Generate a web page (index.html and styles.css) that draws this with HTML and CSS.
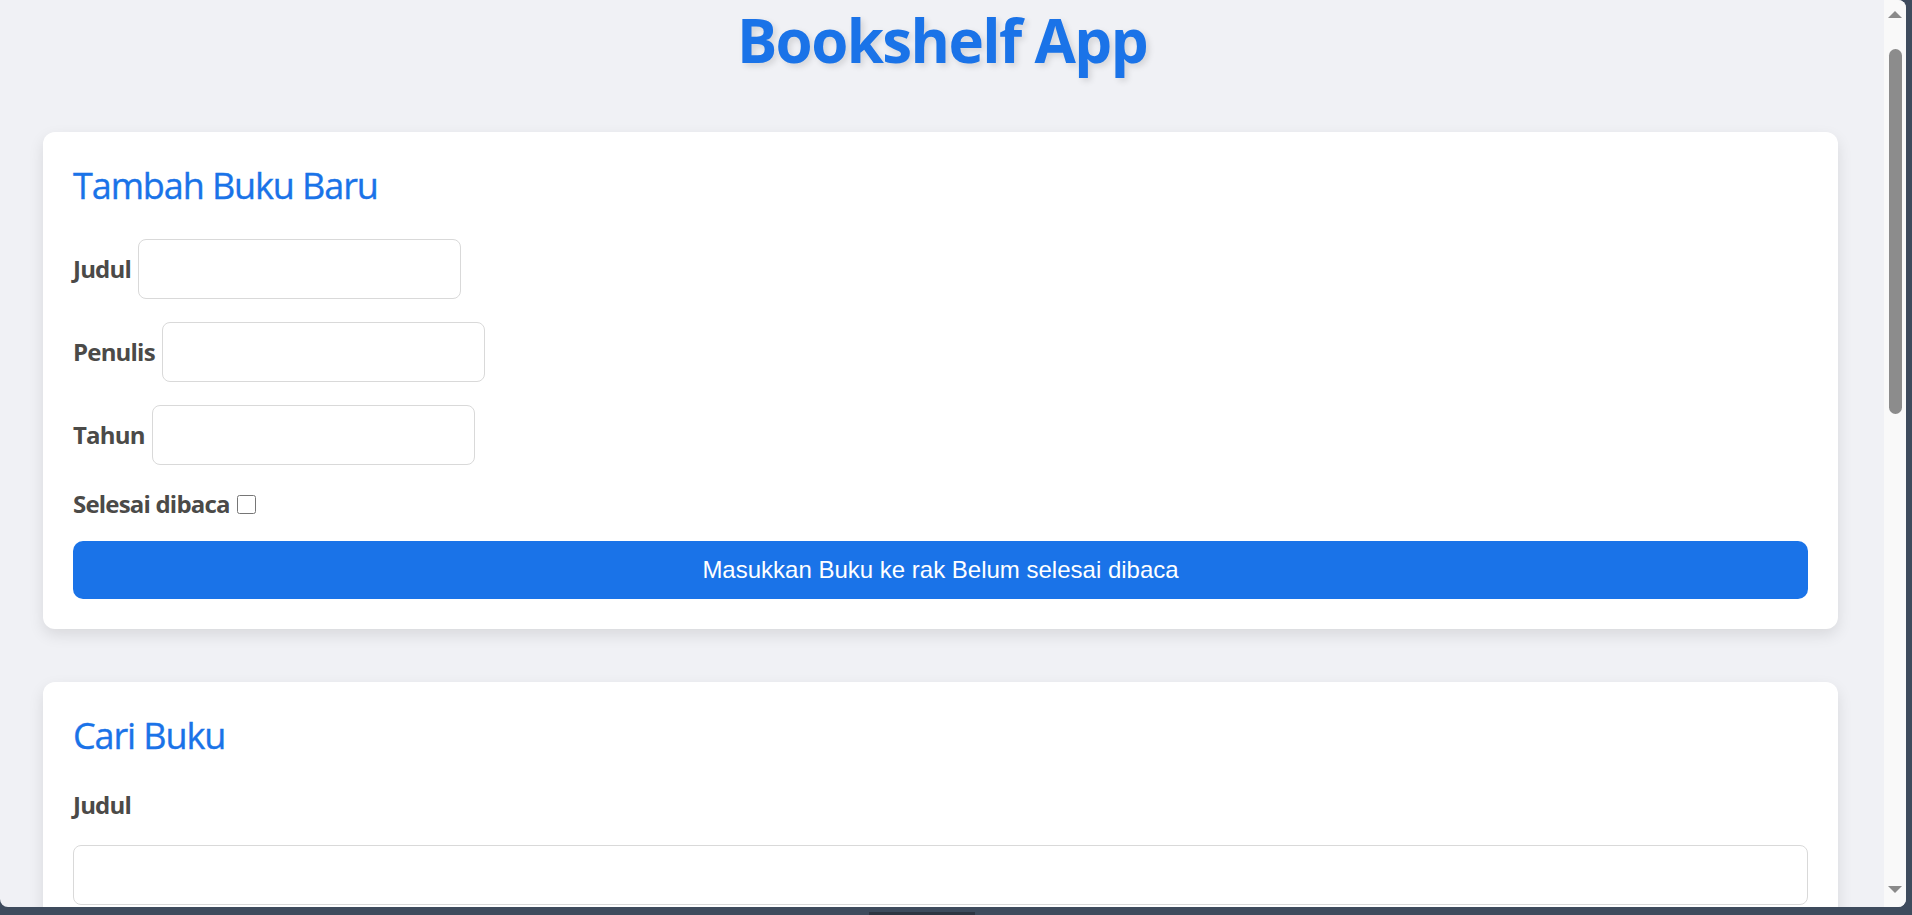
FILE: index.html
```html
<!DOCTYPE html>
<html lang="id">
<head>
<meta charset="utf-8">
<title>Bookshelf App</title>
<link rel="stylesheet" href="styles.css">
</head>
<body>
<div class="screen">
  <div class="window">
    <div class="viewport">
      <header class="app-header">
        <h1>Bookshelf App</h1>
      </header>
      <main class="container">
        <section class="card">
          <h2>Tambah Buku Baru</h2>
          <form class="book-form">
            <div class="field">
              <label for="bookTitle">Judul</label>
              <input id="bookTitle" type="text">
            </div>
            <div class="field">
              <label for="bookAuthor">Penulis</label>
              <input id="bookAuthor" type="text">
            </div>
            <div class="field">
              <label for="bookYear">Tahun</label>
              <input id="bookYear" type="number">
            </div>
            <div class="field check-field">
              <label for="bookComplete">Selesai dibaca</label>
              <input id="bookComplete" type="checkbox">
            </div>
            <button type="button" class="submit-btn">Masukkan Buku ke rak <span>Belum selesai dibaca</span></button>
          </form>
        </section>
        <section class="card">
          <h2>Cari Buku</h2>
          <form class="search-form">
            <label for="searchTitle" class="block-label">Judul</label>
            <input id="searchTitle" type="text" class="full-input">
          </form>
        </section>
      </main>
    </div>
    <div class="scrollbar">
      <div class="arrow arrow-up"></div>
      <div class="track"><div class="thumb"></div></div>
      <div class="arrow arrow-down"></div>
    </div>
  </div>
  <div class="taskbar"><div class="task-item"></div></div>
</div>
</body>
</html>
```
FILE: styles.css
```css
* {
  box-sizing: border-box;
}

html, body {
  margin: 0;
  padding: 0;
  height: 915px;
  overflow: hidden;
}

body {
  background: #3e4b5d;
  font-family: "Open Sans", "Noto Sans", sans-serif;
}

.screen {
  display: flex;
  flex-direction: column;
  height: 915px;
}

.window {
  display: flex;
  height: 907px;
  margin-right: 6px;
  background: #f0f1f5;
  border-radius: 0 8px 8px 8px;
  overflow: hidden;
}

.viewport {
  flex: 1;
  overflow: hidden;
}

.app-header h1 {
  margin: 0 0 52px;
  line-height: 80px;
  font-size: 60px;
  font-weight: 700;
  letter-spacing: -1.6px;
  text-align: center;
  color: #1a73e8;
  text-shadow: 3px 3px 6px rgba(0, 0, 0, 0.12);
}

.container {
  padding: 0 46px 0 43px;
}

.card {
  background: #ffffff;
  border-radius: 12px;
  padding: 30px;
  margin-bottom: 53px;
  box-shadow: 0 6px 15px rgba(0, 0, 0, 0.1);
}

.card h2 {
  margin: 0 0 29px;
  font-size: 36px;
  line-height: 48px;
  font-weight: 400;
  letter-spacing: -1.1px;
  color: #1a73e8;
  -webkit-text-stroke: 0.35px #1a73e8;
}

label {
  font-size: 24px;
  line-height: 32px;
  font-weight: 700;
  letter-spacing: -0.8px;
  color: #4b4a48;
}

.field {
  display: flex;
  align-items: center;
  gap: 7px;
  margin-bottom: 23px;
}

.field input[type="text"],
.field input[type="number"] {
  width: 323px;
  height: 60px;
  border: 1px solid #d9d9d9;
  border-radius: 8px;
  background: #fff;
  font-size: 24px;
}

.check-field {
  gap: 7px;
  margin-bottom: 21px;
}

.check-field input[type="checkbox"] {
  width: 19px;
  height: 19px;
  margin: 0;
}

.submit-btn {
  display: block;
  width: 100%;
  height: 58px;
  border: none;
  border-radius: 10px;
  background: #1a73e8;
  color: #ffffff;
  font-family: "Liberation Sans", Arial, sans-serif;
  font-size: 24px;
}

.block-label {
  display: block;
  margin-bottom: 24px;
}

.full-input {
  display: block;
  width: 100%;
  height: 60px;
  border: 1px solid #d9d9d9;
  border-radius: 8px;
  background: #fff;
}

/* scrollbar column */
.scrollbar {
  width: 22px;
  background: #f9f9f9;
  display: flex;
  flex-direction: column;
  align-items: center;
  padding: 11px 0 14px;
}

.arrow {
  width: 0;
  height: 0;
  border-left: 7.5px solid transparent;
  border-right: 7.5px solid transparent;
}

.arrow-up {
  border-bottom: 7px solid #8a8a8a;
}

.arrow-down {
  border-top: 7px solid #8a8a8a;
}

.track {
  flex: 1;
  width: 100%;
  display: flex;
  justify-content: center;
}

.thumb {
  width: 13px;
  height: 365px;
  margin-top: 31px;
  border-radius: 7px;
  background: #8c8c8c;
}

.taskbar {
  flex: 1;
  display: flex;
  align-items: flex-end;
  padding-left: 869px;
}

.task-item {
  width: 106px;
  height: 3px;
  background: #2d3542;
}
```
